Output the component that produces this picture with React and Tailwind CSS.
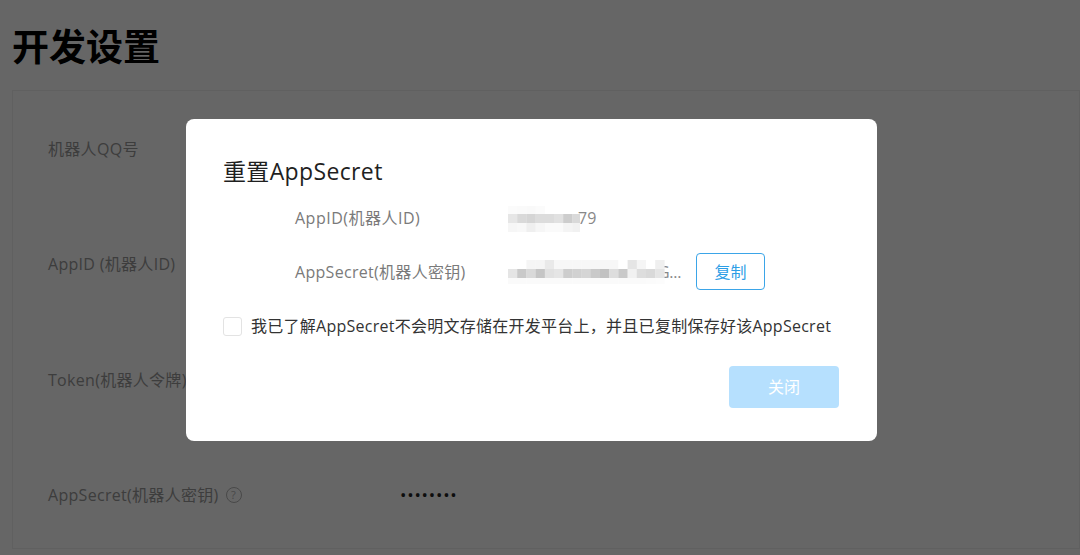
const font = "font-['Open_Sans','Noto_Sans_CJK_SC',sans-serif]";

const rows = [
  { label: "机器人QQ号" },
  { label: "AppID (机器人ID)" },
  { label: "Token(机器人令牌)" },
  { label: "AppSecret(机器人密钥)", help: true, value: "••••••••" },
];

// pixelated patches hiding the ids, one grey per 9px cell
const idRows = [
  { y: 0, h: 8, cells: ["#fbfbfb", "#fafafa", "#f9f9f9", "#fbfbfb"] },
  { y: 8, h: 9, cells: ["#e6e6e6", "#d9d9d9", "#d5d5d5", "#dcdcdc", "#dcdcdc", "#e1e1e1", "#cdcdcd", "#d9d9d9"] },
  { y: 17, h: 9, cells: ["#f6f6f6", "#f8f8f8", "#efefef", "#f6f6f6", "#fafafa", "#fafafa", "#f4f4f4", "#f1f1f1"] },
];
const secretRows = [
  {
    y: 0, h: 9,
    cells: ["#fff", "#fff", "#f5f5f5", "#f5f5f5", "#e9e9e9", "#f7f7f7", "#f7f7f7", "#f7f7f7", "#f7f7f7", "#f7f7f7", "#f7f7f7", "#f7f7f7", "#fff", "#e5e5e5", "#f5f5f5", "#fff", "#efefef"],
  },
  {
    y: 9, h: 9,
    cells: ["#e5e5e5", "#c9c9c9", "#d9d9d9", "#c5c5c5", "#e1e1e1", "#e5e5e5", "#cdcdcd", "#d1d1d1", "#d5d5d5", "#c9c9c9", "#c1c1c1", "#dddddd", "#c9c9c9", "#f1f1f1", "#dddddd", "#d9d9d9", "#e5e5e5"],
  },
  {
    y: 18, h: 6,
    cells: ["#fafafa", "#fafafa", "#fafafa", "#fafafa", "#fafafa", "#fafafa", "#fafafa", "#fafafa", "#fafafa", "#fafafa", "#fafafa", "#fafafa", "#fafafa", "#fafafa", "#fafafa", "#fbfbfb", "#fcfcfc"],
  },
];

function Mosaic({ rows, width, height }) {
  return (
    <svg width={width} height={height} className="absolute left-0 top-0 blur-[0.6px]">
      {rows.flatMap((r) =>
        r.cells.map((c, i) => <rect key={`${r.y}-${i}`} x={i * 9.2} y={r.y} width="9.4" height={r.h} fill={c} />)
      )}
    </svg>
  );
}

export default function App() {
  return (
    <div className={`relative h-[555px] w-[1080px] overflow-hidden bg-white ${font}`}>
      <div className="pl-3 pt-[22px]">
        <h1 className="text-[37px] leading-[50px] font-bold text-black">开发设置</h1>
        <div className="mt-[18px] h-[459px] border border-[#f0f0f0] pl-[35px] pt-[46px]">
          {rows.map((row) => (
            <div key={row.label} className="flex h-[115.3px] items-start text-base leading-6 tracking-[0.3px] text-[#999]">
              <span className="flex w-[352px] items-center gap-[7px]">
                {row.label}
                {row.help && (
                  <span className="flex h-4 w-4 items-center justify-center rounded-full border border-[#b5b5b5] text-[11px] leading-none text-[#b5b5b5]">?</span>
                )}
              </span>
              {row.value && <span className="text-[17px] tracking-[0.8px] text-[#222]">{row.value}</span>}
            </div>
          ))}
        </div>
      </div>

      <div className="absolute inset-0 bg-black/60 pl-[186px] pt-[119px]">
        <div className="h-[322px] w-[691px] rounded-lg bg-white px-[37px] pt-[36px]">
          <h2 className="text-[23px] leading-8 tracking-[0.36px] text-[#1f1f1f]">重置AppSecret</h2>
          <div className="mt-[19px] flex h-6 items-center pl-[72px] text-base text-[#7a7a7a]">
            <span className="w-[213px] tracking-[0.5px]">AppID(机器人ID)</span>
            <span className="relative h-6 w-[90px] pl-[70px] leading-6 text-[#888]">
              79
              <Mosaic rows={idRows} width={72} height={26} />
            </span>
          </div>
          <div className="mt-[23px] flex h-[37px] items-center pl-[72px] text-base text-[#7a7a7a]">
            <span className="w-[213px] tracking-[0.3px]">AppSecret(机器人密钥)</span>
            <span className="relative h-6 w-[188px] pl-[150px] leading-6 tracking-[-0.3px] text-[#888]">
              G...
              <Mosaic rows={secretRows} width={157} height={24} />
            </span>
            <button className="h-[37px] w-[69px] rounded border border-[#3ba5e8] text-base text-[#2d9ee6]">复制</button>
          </div>
          <label className="mt-6 flex h-6 items-center text-base tracking-[0.26px] whitespace-nowrap text-[#333]">
            <span className="mr-[9px] h-[19px] w-[19px] rounded-[3px] border border-[#e3e3e3] bg-white" />
            我已了解AppSecret不会明文存储在开发平台上，并且已复制保存好该AppSecret
          </label>
          <div className="mt-[28px] flex justify-end pr-px">
            <button className="h-[42px] w-[110px] rounded-sm bg-[#b6e0fe] text-base text-white">关闭</button>
          </div>
        </div>
      </div>
    </div>
  );
}
